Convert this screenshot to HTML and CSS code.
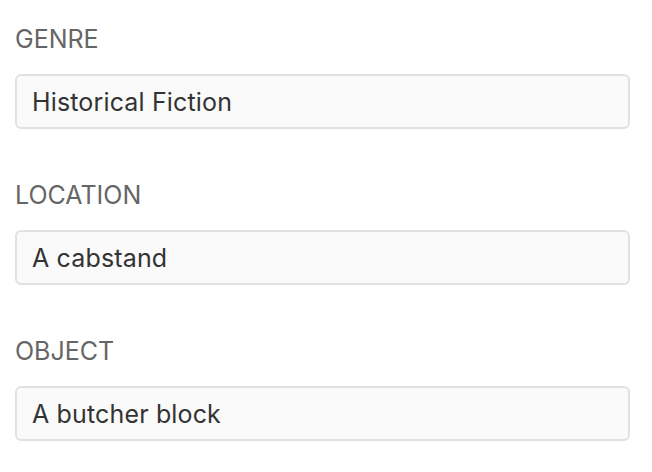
FILE: index.html
```html
<!DOCTYPE html>
<html lang="en">
<head>
    <meta charset="UTF-8">
    <meta name="viewport" content="width=device-width, initial-scale=1.0">
    <title>Story Prompt</title>
    <link rel="stylesheet" href="styles.css">
</head>
<body>
    <form class="prompt-form">
        <div class="field">
            <label for="genre">Genre</label>
            <input type="text" id="genre" value="Historical Fiction">
        </div>
        <div class="field">
            <label for="location">Location</label>
            <input type="text" id="location" value="A cabstand">
        </div>
        <div class="field">
            <label for="object">Object</label>
            <input type="text" id="object" value="A butcher block">
        </div>
    </form>
</body>
</html>
```

FILE: styles.css
```css
* {
    margin: 0;
    padding: 0;
    box-sizing: border-box;
}

body {
    font-family: Inter, 'Helvetica Neue', Arial, sans-serif;
    background: white;
}

.prompt-form {
    padding: 24px 22px 0 15px;
}

.field {
    margin-bottom: 51px;
}

.field label {
    display: block;
    font-size: 25px;
    line-height: 30px;
    color: #666;
    text-transform: uppercase;
    margin-bottom: 20px;
}

.field input {
    display: block;
    width: 100%;
    height: 55px;
    padding: 0 15px;
    font-family: inherit;
    font-size: 25px;
    letter-spacing: 0.15px;
    color: #333;
    background: #fafafa;
    border: 2px solid #e1e1e1;
    border-radius: 6px;
    outline: none;
}
```
